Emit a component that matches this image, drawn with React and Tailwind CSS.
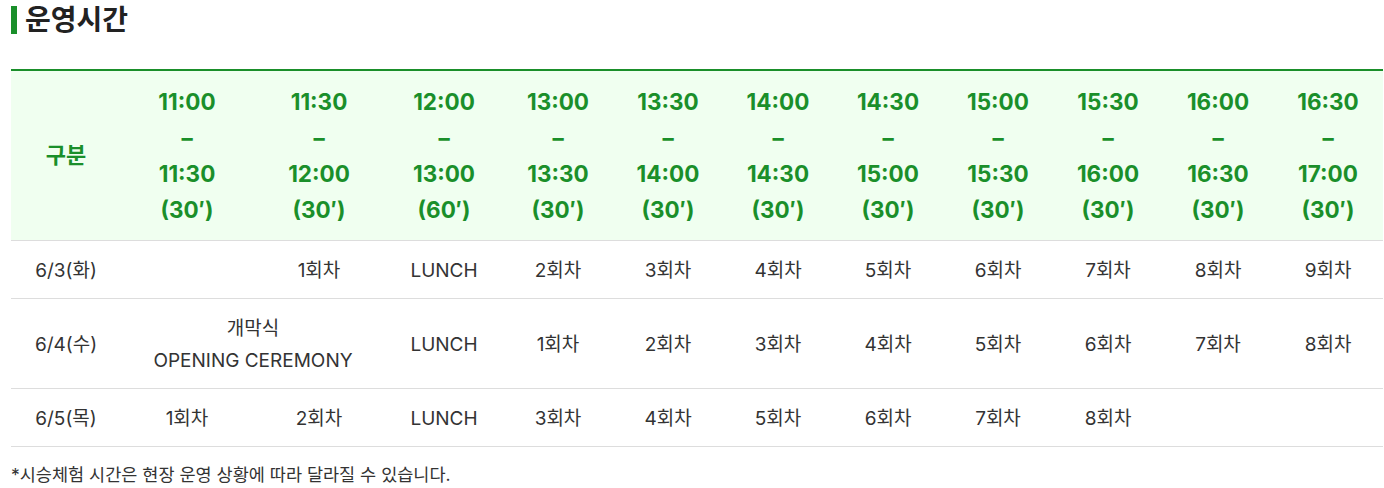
const slots = [
  ['11:00', '11:30', "30′"],
  ['11:30', '12:00', "30′"],
  ['12:00', '13:00', "60′"],
  ['13:00', '13:30', "30′"],
  ['13:30', '14:00', "30′"],
  ['14:00', '14:30', "30′"],
  ['14:30', '15:00', "30′"],
  ['15:00', '15:30', "30′"],
  ['15:30', '16:00', "30′"],
  ['16:00', '16:30', "30′"],
  ['16:30', '17:00', "30′"],
];

const rows = [
  { day: '6/3(화)', cells: ['', '1회차', 'LUNCH', '2회차', '3회차', '4회차', '5회차', '6회차', '7회차', '8회차', '9회차'] },
  { day: '6/4(수)', opening: true, cells: ['LUNCH', '1회차', '2회차', '3회차', '4회차', '5회차', '6회차', '7회차', '8회차'] },
  { day: '6/5(목)', cells: ['1회차', '2회차', 'LUNCH', '3회차', '4회차', '5회차', '6회차', '7회차', '8회차', '', ''] },
];

const font = { fontFamily: 'Inter, "Noto Sans CJK KR", sans-serif' };

export default function App() {
  return (
    <div className="bg-white px-[11px] pt-[5px] text-[#333]" style={font}>
      <h2 className="flex items-center text-[28px] font-bold leading-[30px] text-[#222]">
        <span className="mr-[8px] inline-block h-[28px] w-[6px] bg-[#1a8f2a]" />
        운영시간
      </h2>

      <table className="mt-[34px] w-[1372px] table-fixed border-collapse border-t-2 border-[#1a8f2a] text-center">
        <colgroup>
          <col className="w-[110px]" />
          <col className="w-[132px]" />
          <col className="w-[132px]" />
          <col className="w-[118px]" />
          {Array.from({ length: 8 }).map((_, i) => (
            <col key={i} className="w-[110px]" />
          ))}
        </colgroup>
        <thead>
          <tr className="h-[170px] border-b border-[#dddddd] bg-[#f0fff0] text-[22.5px] font-bold leading-[36px] text-[#1a8f2a]">
            <th className="text-[22px]">구분</th>
            {slots.map(([a, b, d]) => (
              <th key={a} className="pt-[2px]">
                <div>{a}</div>
                <div>–</div>
                <div>{b}</div>
                <div>({d})</div>
              </th>
            ))}
          </tr>
        </thead>
        <tbody className="text-[19px] leading-[32px] text-[#333]">
          {rows.map((r) => (
            <tr key={r.day} className={`border-b border-[#dddddd] ${r.opening ? 'h-[90px]' : 'h-[58px]'}`}>
              <td className="pt-[3px]">{r.day}</td>
              {r.opening && (
                <td colSpan={2} className="pt-[3px]">
                  <div>개막식</div>
                  <div>OPENING CEREMONY</div>
                </td>
              )}
              {r.cells.map((c, i) => (
                <td key={i} className="pt-[3px]">{c}</td>
              ))}
            </tr>
          ))}
        </tbody>
      </table>

      <p className="mt-[15px] text-[17.5px] leading-[26px] text-[#333]">
        *시승체험 시간은 현장 운영 상황에 따라 달라질 수 있습니다.
      </p>
    </div>
  );
}
